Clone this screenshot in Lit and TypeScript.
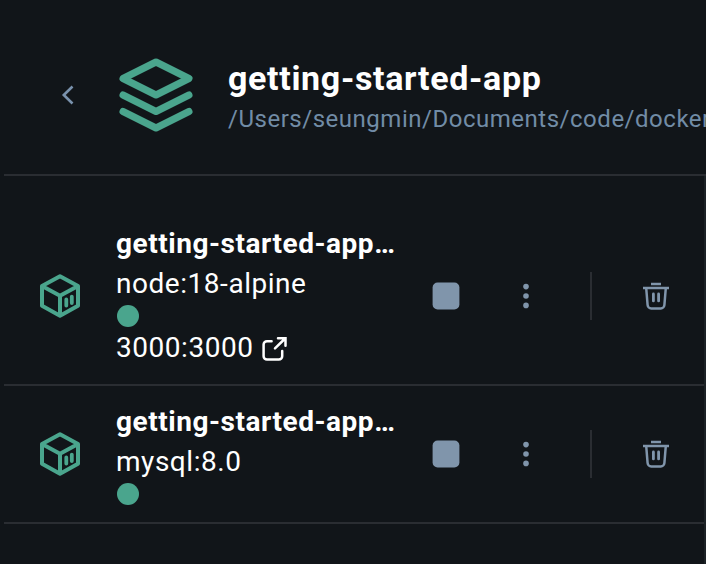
import { LitElement, html, css, svg, nothing } from "lit";
import { customElement, property } from "lit/decorators.js";

@customElement("container-row")
class ContainerRow extends LitElement {
  @property() name = "";
  @property() image = "";
  @property() port = "";

  static styles = css`
    :host {
      display: flex;
      align-items: center;
      box-sizing: border-box;
      padding: 16px 0 16px 32px;
      border-bottom: 2px solid #2a2d32;
    }
    svg { display: block; flex: none; fill: none; }
    .cube { color: #4aa58d; width: 48px; height: 48px; }
    .info { width: 280px; margin-left: 32px; color: #fff; font-size: 28px; line-height: 40px; letter-spacing: 0.54px; }
    .name { font-weight: 700; white-space: nowrap; overflow: hidden; text-overflow: ellipsis; }
    .text { white-space: nowrap; }
    .port { display: flex; align-items: center; gap: 7px; }
    .port svg { margin-top: 4px; }
    .status { height: 24px; display: flex; align-items: center; padding-left: 1px; }
    .dot { width: 22px; height: 22px; border-radius: 50%; background: #4aa58d; }
    .action { color: #8095ab; width: 48px; height: 48px; }
    .stop { margin-left: 26px; }
    .more { margin-left: 32px; }
    .trash { margin-left: 40px; }
    .divider { width: 2px; height: 48px; margin-left: 40px; background: #2a2d32; }
  `;

  render() {
    return html`
      <svg class="cube" viewBox="0 0 48 48" stroke="currentColor" stroke-width="4" stroke-linejoin="round" stroke-linecap="round">
        <path d="M24 4.2 42 14V33.8L24 43.8 6 33.8V14Z M6 14 24 23.8 42 14 M24 23.8V43.8" />
        <path d="M30.3 27.4V33.6M35.8 24.6V31" stroke-width="3.8" />
      </svg>
      <div class="info">
        <div class="name">${this.name}</div>
        <div class="text">${this.image}</div>
        <div class="status"><div class="dot"></div></div>
        ${this.port
          ? html`<div class="text port">${this.port}
              <svg width="28" height="28" viewBox="0 0 28 28" stroke="#fff" stroke-width="2.5" stroke-linecap="round">
                <path d="M10.6 5.2H6A3.4 3.4 0 0 0 2.6 8.6V20.2A3.4 3.4 0 0 0 6 23.6H17.8a3.4 3.4 0 0 0 3.4-3.4V15" />
                <path d="M14 12.4 23.6 3M17 2.3H24.5V9.8" />
              </svg></div>`
          : nothing}
      </div>
      <svg class="action stop" viewBox="0 0 48 48"><rect x="10.6" y="10.6" width="26.8" height="26.8" rx="5" fill="currentColor" /></svg>
      <svg class="action more" viewBox="0 0 48 48">
        ${[14.6, 24, 33.4].map((y) => svg`<circle cx="24" cy=${y} r="2.8" fill="currentColor" />`)}
      </svg>
      <div class="divider"></div>
      <svg class="action trash" viewBox="0 0 48 48" stroke="currentColor" stroke-width="2.5">
        <path d="M19 12H29M11 16H37" />
        <path d="M14.2 16 15.6 33a3.6 3.6 0 0 0 3.6 3.4H28.8a3.6 3.6 0 0 0 3.6-3.4L33.8 16" />
        <path d="M21.4 22V28.9M26.6 22V28.9" stroke-width="2.8" stroke-linecap="round" />
      </svg>
    `;
  }
}

@customElement("app-root")
class AppRoot extends LitElement {
  static styles = css`
    :host {
      display: block;
      box-sizing: border-box;
      height: 564px;
      overflow: hidden;
      padding-left: 4px;
      background: #111519;
      font-family: Roboto, "Liberation Sans", sans-serif;
    }
    .header {
      display: flex;
      align-items: center;
      box-sizing: border-box;
      height: 176px;
      padding: 16px 0 0 40px;
      border-bottom: 2px solid #2a2d32;
    }
    svg { display: block; flex: none; fill: none; }
    .stack { margin-left: 28px; }
    .heading { margin: 2px 0 0 28px; white-space: nowrap; }
    .title { color: #fff; font-size: 34px; line-height: 46px; font-weight: 700; letter-spacing: 0.66px; }
    .path { color: #718ca6; font-size: 24px; line-height: 36px; letter-spacing: 0.52px; }
    .list { box-sizing: border-box; height: 388px; padding-top: 32px; border-right: 2px solid #1c2226; }
  `;

  render() {
    return html`
      <div class="header">
        <svg width="40" height="40" viewBox="0 0 40 40" stroke="#7a92ad" stroke-width="2.6"><path d="M28.5 11.5 19.8 20 28.5 28.5" /></svg>
        <svg class="stack" width="88" height="88" viewBox="0 0 88 88" stroke="#4aa58d" stroke-width="7" stroke-linejoin="round" stroke-linecap="round">
          <path d="M44 11 77 27.5 44 44 11 27.5Z M11 44 44 60.5 77 44 M11 60.5 44 77 77 60.5" />
        </svg>
        <div class="heading">
          <div class="title">getting-started-app</div>
          <div class="path">/Users/seungmin/Documents/code/docker</div>
        </div>
      </div>
      <div class="list">
        <container-row name="getting-started-app-node-1" image="node:18-alpine" port="3000:3000"></container-row>
        <container-row name="getting-started-app-mysql-1" image="mysql:8.0"></container-row>
      </div>
    `;
  }
}
